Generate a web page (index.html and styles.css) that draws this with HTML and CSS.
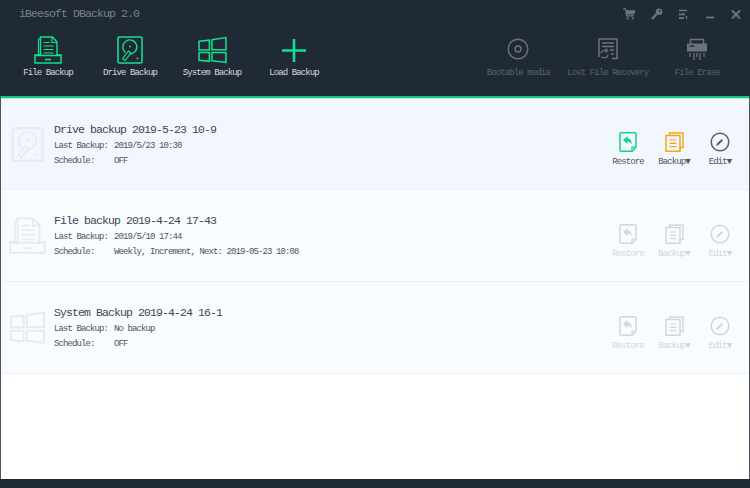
FILE: index.html
```html
<!DOCTYPE html>
<html lang="en">
<head>
    <meta charset="UTF-8">
    <title>iBeesoft DBackup 2.0</title>
    <link rel="stylesheet" href="styles.css">
</head>
<body>

<svg class="defs" width="0" height="0">
    <symbol id="i-drive" viewBox="0 0 26 28">
        <rect x="1" y="1" width="24" height="26" rx="1.500" fill="none" stroke="currentColor" stroke-width="1.600"/>
        <path d="M8.500 16.500a7 7 0 1 1 4 1.500" fill="none" stroke="currentColor" stroke-width="1.300"/>
        <circle cx="13" cy="10.500" r="1" fill="currentColor"/>
        <path d="M5.500 22.500l6-7.500 2.500 2-6 7.500z" fill="none" stroke="currentColor" stroke-width="1.200"/>
        <circle cx="20.500" cy="22.500" r="1" fill="currentColor"/>
    </symbol>
    <symbol id="i-file" viewBox="0 0 28 28">
        <path d="M4.500 19V3.500L6.500 2" fill="none" stroke="currentColor" stroke-width="1.200"/>
        <path d="M6.500 19V1h12l4.500 5v13" fill="none" stroke="currentColor" stroke-width="1.400"/>
        <path d="M18 1v5.500h5" fill="none" stroke="currentColor" stroke-width="1.200"/>
        <path d="M9.500 6.500h6M9.500 10h10M9.500 13.500h10M9.500 17h10" fill="none" stroke="currentColor" stroke-width="1.200"/>
        <path d="M6 19H1v8h26v-8h-5" fill="none" stroke="currentColor" stroke-width="1.500"/>
        <path d="M1 19.500h26M11 23.500h6" fill="none" stroke="currentColor" stroke-width="1.400"/>
    </symbol>
    <symbol id="i-win" viewBox="0 0 28 26">
        <path d="M1 4.500l10-1v9.500H1zM13.500 3.200L27 1v11.800H13.500zM1 15.500h10v8.500l-10-1zM13.500 15.500H27V25l-13.500-1.600z" fill="none" stroke="currentColor" stroke-width="1.500"/>
    </symbol>
    <symbol id="i-restore" viewBox="0 0 18 20">
        <path d="M2 .8h14a1 1 0 0 1 1 1v13.400l-3.800 4H2a1 1 0 0 1-1-1V1.800a1 1 0 0 1 1-1z" fill="none" stroke="currentColor" stroke-width="1.500"/>
        <path d="M13 19v-3.800h3.800" fill="none" stroke="currentColor" stroke-width="1.300"/>
        <path d="M8.500 4L4 8l4.500 4V9.500c2 0 3.300 1 4 3 .4-3.500-1-6-4-6z" fill="currentColor"/>
    </symbol>
    <symbol id="i-backup" viewBox="0 0 19 20">
        <path d="M4.500 3.500V1h13.500v14.500h-3" fill="none" stroke="currentColor" stroke-width="1.400"/>
        <path d="M1 3.500h14v15.700H1z" fill="none" stroke="currentColor" stroke-width="1.500"/>
        <path d="M4.500 8h7M4.500 11.300h7M4.500 14.600h7" fill="none" stroke="currentColor" stroke-width="1.200"/>
    </symbol>
    <symbol id="i-edit" viewBox="0 0 20 20">
        <circle cx="10" cy="10" r="8.800" fill="none" stroke="currentColor" stroke-width="1.600"/>
        <path d="M6.200 13.800l.5-2 4.900-4.900 1.500 1.500-4.900 4.900z" fill="currentColor"/>
    </symbol>
</svg>

<div class="app">
    <header class="head">
        <div class="titlebar">
            <span class="app-name">iBeesoft DBackup 2.0</span>
            <div class="win-btns">
                <svg width="13" height="12" viewBox="0 0 14 13"><path d="M0 1h2.500l1.500 7.500h7.500" fill="none" stroke="currentColor" stroke-width="1.300"/><path d="M3 2.500h10.500l-1.500 4.500H4z" fill="currentColor"/><circle cx="5" cy="11.300" r="1.200" fill="currentColor"/><circle cx="10.500" cy="11.300" r="1.200" fill="currentColor"/></svg>
                <svg width="12" height="12" viewBox="0 0 12 12"><path d="M1 11l4.500-5" stroke="currentColor" stroke-width="2.200"/><circle cx="8" cy="3.800" r="3.300" fill="currentColor"/><circle cx="8.800" cy="3" r=".9" fill="#202a36"/></svg>
                <svg width="12" height="11" viewBox="0 0 12 11"><path d="M2 1.500h8M2 5.300h6M2 9.200h5" stroke="currentColor" stroke-width="1.700"/><path d="M9.500 7v3" stroke="currentColor" stroke-width="1.300"/></svg>
                <svg width="12" height="11" viewBox="0 0 12 11"><path d="M2 8.500h8" stroke="currentColor" stroke-width="1.800"/></svg>
                <svg width="12" height="11" viewBox="0 0 12 11"><path d="M2 1.500l8 8M10 1.500l-8 8" stroke="currentColor" stroke-width="1.800"/></svg>
            </div>
        </div>
        <nav class="toolbar">
            <div class="tools">
                <div class="tool">
                    <svg class="tool-icon" width="28" height="28"><use href="#i-file"/></svg>
                    <span>File Backup</span>
                </div>
                <div class="tool">
                    <svg class="tool-icon" width="26" height="28"><use href="#i-drive"/></svg>
                    <span>Drive Backup</span>
                </div>
                <div class="tool">
                    <svg class="tool-icon" width="29" height="28"><use href="#i-win"/></svg>
                    <span>System Backup</span>
                </div>
                <div class="tool">
                    <svg class="tool-icon" width="26" height="28" viewBox="0 0 26 28"><path d="M13 3v23M1 14.500h24" fill="none" stroke="currentColor" stroke-width="2.600"/></svg>
                    <span>Load Backup</span>
                </div>
            </div>
            <div class="tools tools-off">
                <div class="tool">
                    <svg class="tool-icon" width="22" height="28" viewBox="0 0 22 28"><circle cx="11" cy="13" r="9.800" fill="none" stroke="currentColor" stroke-width="1.400"/><circle cx="11" cy="13" r="3" fill="none" stroke="currentColor" stroke-width="1.400"/></svg>
                    <span>Bootable media</span>
                </div>
                <div class="tool">
                    <svg class="tool-icon" width="20" height="28" viewBox="0 0 20 28"><path d="M1 21V3h18v19.500h-5" fill="none" stroke="currentColor" stroke-width="1.500"/><path d="M4 7h12M4 10.500h12M12 14h4M13 18h3" stroke="currentColor" stroke-width="1.300"/><path d="M3 17.500c0-2.500 2.500-3.500 6-3M3 21c4 1.500 7 .5 7-2.500M7.500 12.500l2 2-2 2" fill="none" stroke="currentColor" stroke-width="1.200"/></svg>
                    <span>Lost File Recovery</span>
                </div>
                <div class="tool">
                    <svg class="tool-icon" width="22" height="28" viewBox="0 0 22 28"><path d="M4.500 9V3.500h13V9" fill="none" stroke="currentColor" stroke-width="1.500"/><path d="M1 7.500h20v8H1z" fill="currentColor"/><path d="M3.500 10h5" stroke="#202a36" stroke-width="1.400"/><path d="M4 17v4M8 17v7M11 17v4M14 17v7M18 17v4" stroke="currentColor" stroke-width="1.300"/></svg>
                    <span>File Erase</span>
                </div>
            </div>
        </nav>
    </header>

    <main class="list">
        <section class="row row-active">
            <svg class="row-icon" width="32" height="35"><use href="#i-drive"/></svg>
            <div class="info">
                <h2>Drive backup 2019-5-23 10-9</h2>
                <p><span class="key">Last Backup:</span>2019/5/23 10:30</p>
                <p><span class="key">Schedule:</span>OFF</p>
            </div>
            <div class="actions">
                <div class="action"><svg class="c-green" width="18" height="20"><use href="#i-restore"/></svg><span>Restore</span></div>
                <div class="action"><svg class="c-orange" width="19" height="20"><use href="#i-backup"/></svg><span>Backup▼</span></div>
                <div class="action"><svg class="c-slate" width="20" height="20"><use href="#i-edit"/></svg><span>Edit▼</span></div>
            </div>
        </section>
        <section class="row">
            <svg class="row-icon" width="36" height="37"><use href="#i-file"/></svg>
            <div class="info">
                <h2>File backup 2019-4-24 17-43</h2>
                <p><span class="key">Last Backup:</span>2019/5/10 17:44</p>
                <p><span class="key">Schedule:</span>Weekly, Increment, Next: 2019-05-23 10:08</p>
            </div>
            <div class="actions actions-off">
                <div class="action"><svg width="18" height="20"><use href="#i-restore"/></svg><span>Restore</span></div>
                <div class="action"><svg width="19" height="20"><use href="#i-backup"/></svg><span>Backup▼</span></div>
                <div class="action"><svg width="20" height="20"><use href="#i-edit"/></svg><span>Edit▼</span></div>
            </div>
        </section>
        <section class="row">
            <svg class="row-icon" width="33" height="33"><use href="#i-win"/></svg>
            <div class="info">
                <h2>System Backup 2019-4-24 16-1</h2>
                <p><span class="key">Last Backup:</span>No backup</p>
                <p><span class="key">Schedule:</span>OFF</p>
            </div>
            <div class="actions actions-off">
                <div class="action"><svg width="18" height="20"><use href="#i-restore"/></svg><span>Restore</span></div>
                <div class="action"><svg width="19" height="20"><use href="#i-backup"/></svg><span>Backup▼</span></div>
                <div class="action"><svg width="20" height="20"><use href="#i-edit"/></svg><span>Edit▼</span></div>
            </div>
        </section>
    </main>

    <footer class="foot"></footer>
</div>

</body>
</html>
```

FILE: styles.css
```css
body, html {
    margin: 0;
    padding: 0;
    height: 100%;
    overflow: hidden;
    font-family: "Liberation Mono", monospace;
    background: #ffffff;
}

.defs {
    position: absolute;
}

.app {
    display: flex;
    flex-direction: column;
    height: 488px;
    box-sizing: border-box;
    border-left: 1px solid #4b5563;
    border-right: 1px solid #4b5563;
}

.head {
    background: #202a36;
    height: 96px;
    margin: 0 -1px;
    flex: none;
}

.titlebar {
    display: flex;
    justify-content: space-between;
    align-items: center;
    height: 27px;
    padding: 0 8px 0 19px;
}

.app-name {
    font-size: 11.500px;
    letter-spacing: -0.900px;
    color: #7a828d;
    margin-top: -1px;
}

.win-btns {
    display: flex;
    align-items: center;
    gap: 14.500px;
    color: #6c7582;
    margin-top: 1px;
}

.toolbar {
    display: flex;
    justify-content: space-between;
    padding: 9px 8px 0 7px;
}

.tools {
    display: flex;
    color: #d5d9dd;
}

.tool {
    width: 82px;
    display: flex;
    flex-direction: column;
    align-items: center;
    font-size: 9px;
    letter-spacing: -0.900px;
    white-space: nowrap;
}

.tool-icon {
    color: #12e08c;
    margin-bottom: 4px;
}

.tools-off .tool {
    width: 89.500px;
    color: #596270;
}

.tools-off .tool-icon {
    color: #6b7380;
}

.list {
    flex: 1;
    border-top: 2px solid #14c583;
}

.list::before {
    content: "";
    display: block;
    height: 1px;
    background: #b5ecd6;
}

.row {
    display: flex;
    align-items: center;
    height: 91px;
    border-bottom: 1px solid #edf1f5;
    background: #f8fcff;
    color: #e6eaee;
}

.row-active {
    height: 90px;
    background: #f2f7fe;
}

.row-icon {
    width: 53px;
    flex: none;
}

.info {
    flex: 1;
    padding-top: 3px;
    color: #4f5560;
}

.info h2 {
    margin: 0 0 3px 0;
    font-size: 11.500px;
    font-weight: normal;
    letter-spacing: -0.900px;
    color: #3e444e;
}

.info p {
    margin: 0;
    height: 15px;
    line-height: 15px;
    font-size: 9px;
    letter-spacing: -0.900px;
}

.key {
    display: inline-block;
    width: 60px;
}

.actions {
    display: flex;
    padding: 11px 6px 0 0;
    color: #4f5560;
}

.action {
    width: 46px;
    display: flex;
    flex-direction: column;
    align-items: center;
    gap: 5px;
    font-size: 9px;
    letter-spacing: -0.900px;
    white-space: nowrap;
}

.c-green { color: #12d585; }
.c-orange { color: #f5a50f; }
.c-slate { color: #5b6272; }

.actions-off {
    color: #d2d6dc;
}

.foot {
    height: 9px;
    flex: none;
    margin: 0 -1px;
    background: #202a36;
}
```
